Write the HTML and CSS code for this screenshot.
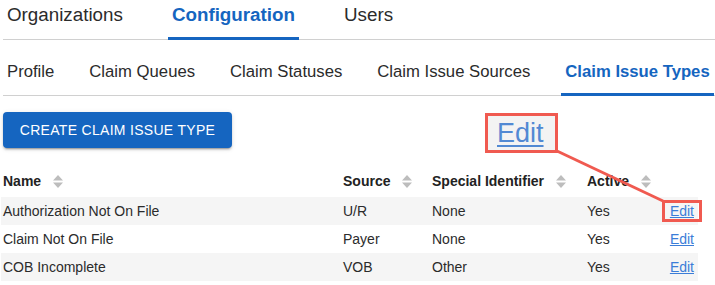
FILE: index.html
```html
<!DOCTYPE html>
<html lang="en">
<head>
    <meta charset="UTF-8">
    <meta name="viewport" content="width=device-width, initial-scale=1.0">
    <title>Claim Issue Types</title>
    <link rel="stylesheet" href="styles.css">
</head>
<body>
    <div class="page">
        <nav class="tabs tabs-main">
            <a class="tab">Organizations</a>
            <a class="tab active">Configuration</a>
            <a class="tab">Users</a>
        </nav>

        <nav class="tabs tabs-sub">
            <a class="tab">Profile</a>
            <a class="tab">Claim Queues</a>
            <a class="tab">Claim Statuses</a>
            <a class="tab">Claim Issue Sources</a>
            <a class="tab active">Claim Issue Types</a>
        </nav>

        <button class="btn-primary">Create Claim Issue Type</button>

        <table class="grid">
            <colgroup>
                <col class="col-name">
                <col class="col-source">
                <col class="col-special">
                <col class="col-active">
                <col class="col-edit">
            </colgroup>
            <thead>
                <tr>
                    <th>Name <span class="sort"><svg width="10" height="15" viewBox="0 0 10 15"><path d="M5 1 L10 6.5 H0 Z M0 8.5 H10 L5 14 Z"/></svg></span></th>
                    <th>Source <span class="sort"><svg width="10" height="15" viewBox="0 0 10 15"><path d="M5 1 L10 6.5 H0 Z M0 8.5 H10 L5 14 Z"/></svg></span></th>
                    <th>Special Identifier <span class="sort"><svg width="10" height="15" viewBox="0 0 10 15"><path d="M5 1 L10 6.5 H0 Z M0 8.5 H10 L5 14 Z"/></svg></span></th>
                    <th>Active <span class="sort"><svg width="10" height="15" viewBox="0 0 10 15"><path d="M5 1 L10 6.5 H0 Z M0 8.5 H10 L5 14 Z"/></svg></span></th>
                    <th></th>
                </tr>
            </thead>
            <tbody>
                <tr>
                    <td>Authorization Not On File</td>
                    <td>U/R</td>
                    <td>None</td>
                    <td>Yes</td>
                    <td class="edit"><a href="#">Edit</a></td>
                </tr>
                <tr>
                    <td>Claim Not On File</td>
                    <td>Payer</td>
                    <td>None</td>
                    <td>Yes</td>
                    <td class="edit"><a href="#">Edit</a></td>
                </tr>
                <tr>
                    <td>COB Incomplete</td>
                    <td>VOB</td>
                    <td>Other</td>
                    <td>Yes</td>
                    <td class="edit"><a href="#">Edit</a></td>
                </tr>
            </tbody>
        </table>

        <!-- annotation callout -->
        <div class="callout-zoom"><span>Edit</span></div>
        <svg class="callout-lines" width="715" height="285" viewBox="0 0 715 285">
            <line x1="557" y1="151" x2="663" y2="201"/>
            <rect x="663.5" y="201.5" width="37" height="19"/>
        </svg>
    </div>
</body>
</html>
```

FILE: styles.css
```css
body {
    margin: 0;
    font-family: "Liberation Sans", Arial, sans-serif;
    color: #222;
    background: #fff;
}
.page {
    position: relative;
    width: 715px;
    height: 285px;
    padding-left: 3px;
    box-sizing: border-box;
    overflow: hidden;
}
.tabs {
    display: flex;
    border-bottom: 1px solid #d0d0d0;
}
.tab {
    display: block;
    padding: 0 4px;
    box-sizing: border-box;
    margin-bottom: -1px;
    border-bottom: 3px solid transparent;
    color: #2b2b2b;
    white-space: nowrap;
}
.tab.active {
    color: #1565c0;
    font-weight: bold;
    border-bottom-color: #1565c0;
}
.tabs-main {
    height: 39px;
    gap: 41px;
}
.tabs-main .tab {
    height: 40px;
    padding-top: 4px;
    font-size: 18.8px;
    line-height: 22px;
}
.tabs-sub {
    height: 55px;
    gap: 27px;
}
.tabs-sub .tab {
    height: 56px;
    padding-top: 22px;
    font-size: 16.7px;
    line-height: 20px;
}
.btn-primary {
    display: block;
    margin-top: 16px;
    width: 229px;
    height: 36px;
    padding: 0 16px;
    background-color: #1565c0;
    color: #fff;
    border: none;
    border-radius: 4px;
    font-family: inherit;
    font-size: 14px;
    letter-spacing: 0.3px;
    text-transform: uppercase;
    box-shadow: 0 3px 1px -2px rgba(0,0,0,0.2), 0 2px 2px 0 rgba(0,0,0,0.14), 0 1px 5px 0 rgba(0,0,0,0.12);
    cursor: pointer;
}
.grid {
    margin-top: 17px;
    margin-left: -2px;
    width: 697px;
    border-collapse: collapse;
    table-layout: fixed;
    font-size: 14px;
}
.col-name { width: 340px; }
.col-source { width: 89px; }
.col-special { width: 155px; }
.col-active { width: 75px; }
.col-edit { width: 38px; }
th, td {
    padding: 0 2px;
    text-align: left;
    white-space: nowrap;
}
th {
    height: 32px;
    font-weight: bold;
    color: #222;
}
td {
    height: 28px;
    color: #2b2b2b;
}
tbody tr:nth-child(odd) {
    background-color: #f5f5f5;
}
.sort {
    display: inline-block;
    margin-left: 8px;
    vertical-align: middle;
    line-height: 0;
}
.sort svg {
    fill: #bdbdbd;
}
td.edit {
    text-align: right;
    padding-right: 4px;
}
td.edit a {
    color: #3b7dd8;
    text-decoration: underline;
}
.callout-zoom {
    position: absolute;
    left: 485px;
    top: 113px;
    width: 73px;
    height: 40px;
    box-sizing: border-box;
    border: 3px solid #f05a50;
    background: #f3f3f3;
    padding-left: 9px;
    font-size: 27px;
    line-height: 34px;
    color: #5289d3;
}
.callout-zoom span {
    text-decoration: underline;
    text-decoration-thickness: 2px;
    text-underline-offset: 3px;
}
.callout-lines {
    position: absolute;
    left: 0;
    top: 0;
    pointer-events: none;
}
.callout-lines line,
.callout-lines rect {
    stroke: #f05a50;
    stroke-width: 3;
    fill: none;
}
```
